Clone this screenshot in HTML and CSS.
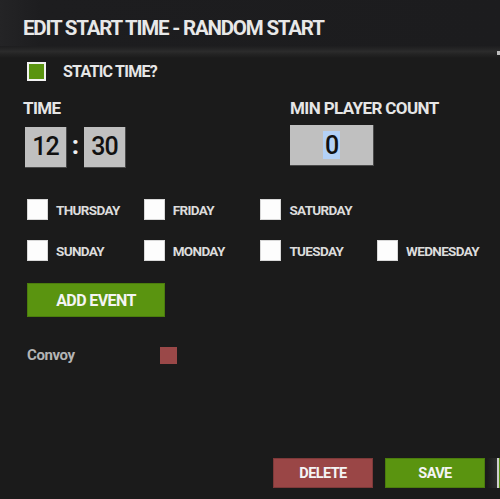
FILE: index.html
```html
<!DOCTYPE html>
<html>
<head>
<meta charset="utf-8">
<link rel="stylesheet" href="styles.css">
</head>
<body>
<div class="panel">
  <div class="header"><h1 class="title">EDIT START TIME - RANDOM START</h1></div>
  <div class="divider"></div>
  <span class="edge-mark"></span>
  <div class="static-row">
    <span class="check check-on"></span>
    <span class="static-label">STATIC TIME?</span>
  </div>
  <div class="fields">
    <div class="field">
      <div class="field-label">TIME</div>
      <div class="time-inputs">
        <div class="box box-small">12</div>
        <span class="colon">:</span>
        <div class="box box-small">30</div>
      </div>
    </div>
    <div class="field">
      <div class="field-label">MIN PLAYER COUNT</div>
      <div class="box box-wide"><span class="sel">0</span></div>
    </div>
  </div>
  <div class="days">
    <div class="day"><span class="check-day"></span><span class="day-label">THURSDAY</span></div>
    <div class="day"><span class="check-day"></span><span class="day-label">FRIDAY</span></div>
    <div class="day"><span class="check-day"></span><span class="day-label">SATURDAY</span></div>
    <div class="day"></div>
    <div class="day"><span class="check-day"></span><span class="day-label">SUNDAY</span></div>
    <div class="day"><span class="check-day"></span><span class="day-label">MONDAY</span></div>
    <div class="day"><span class="check-day"></span><span class="day-label">TUESDAY</span></div>
    <div class="day"><span class="check-day"></span><span class="day-label">WEDNESDAY</span></div>
  </div>
  <div class="add-row"><button class="btn btn-green btn-add">ADD EVENT</button></div>
  <div class="event-row">
    <span class="event-name">Convoy</span>
    <span class="event-swatch"></span>
  </div>
  <div class="footer">
    <button class="btn btn-red btn-foot">DELETE</button>
    <button class="btn btn-green btn-foot">SAVE</button>
    <div class="peek"><span class="peek-shadow"></span><span class="peek-btn"></span></div>
  </div>
</div>
</body>
</html>
```

FILE: styles.css
```css
* { box-sizing: border-box; }
html, body {
  margin: 0;
  padding: 0;
  width: 500px;
  height: 499px;
  overflow: hidden;
  background: #1b1b1b;
}
.panel {
  position: relative;
  width: 500px;
  height: 499px;
  display: flex;
  flex-direction: column;
  font-family: Roboto, "Liberation Sans", sans-serif;
  font-weight: 700;
  color: #e6e6e6;
}
.header {
  height: 46px;
  background: linear-gradient(90deg, #242426 0%, #1d1d1f 8%, #1c1c1e 100%);
  display: flex;
  align-items: center;
  padding-left: 23px;
}
.title {
  margin: 0;
  padding-top: 10px;
  font-size: 20.5px;
  font-weight: 700;
  letter-spacing: -1.2px;
  color: #e8e8e8;
}
.divider {
  height: 12px;
  background: linear-gradient(180deg, #1d1d1f 0%, #2b2b2b 45%, #232323 70%, #1b1b1b 100%);
}
.edge-mark {
  position: absolute;
  right: 0;
  top: 51px;
  width: 3px;
  height: 4px;
  background: #bdbdbd;
}
.static-row {
  display: flex;
  align-items: center;
  gap: 17px;
  padding-left: 27px;
  margin-top: 4px;
  height: 18px;
}
.check {
  width: 19px;
  height: 19px;
  border: 2px solid #f2f2f2;
}
.check-on { background: #5a9410; }
.static-label {
  font-size: 16px;
  letter-spacing: -0.75px;
  color: #e6e6e6;
}
.fields {
  display: grid;
  grid-template-columns: 267px 1fr;
  padding-left: 23px;
  margin-top: 18px;
}
.field-label {
  font-size: 17px;
  letter-spacing: -0.6px;
  line-height: 20px;
  color: #e6e6e6;
}
.time-inputs {
  display: flex;
  align-items: center;
  margin-top: 7px;
  padding-left: 2px;
}
.box {
  height: 41px;
  background: #c0c0c0;
  border-right: 1px solid #4a4a4a;
  border-bottom: 1px solid #4a4a4a;
  color: #111;
  font-weight: 500;
  font-size: 25px;
  letter-spacing: -1px;
  display: flex;
  align-items: center;
  justify-content: center;
}
.box-small { width: 42px; }
.colon {
  width: 17px;
  text-align: center;
  font-size: 26px;
  font-weight: 700;
  color: #f0f0f0;
  line-height: 41px;
  padding-bottom: 3px;
}
.box-wide {
  width: 84px;
  margin-top: 7px;
}
.sel {
  background: #b3d1f7;
  padding: 3px 2px 2px;
  line-height: 23px;
}
.days {
  display: grid;
  grid-template-columns: repeat(4, 116.7px);
  row-gap: 20px;
  padding-left: 27px;
  margin-top: 30px;
}
.day {
  display: flex;
  align-items: center;
  gap: 8px;
  height: 21px;
}
.check-day {
  width: 21px;
  height: 21px;
  background: #fdfdfd;
  border: 1px solid #d8d8d8;
  flex: none;
}
.day-label {
  font-size: 13.5px;
  letter-spacing: -0.65px;
  color: #dcdcdc;
}
.add-row {
  padding-left: 27px;
  margin-top: 22px;
}
.btn {
  font-family: Roboto, "Liberation Sans", sans-serif;
  font-weight: 700;
  color: #f4f4f4;
  border: none;
  padding: 0;
  display: flex;
  align-items: center;
  justify-content: center;
  letter-spacing: -0.6px;
}
.btn-green {
  background: #5a9410;
  box-shadow: inset 0 0 0 1px #4b7d0d;
}
.btn-red {
  background: #9a4646;
  box-shadow: inset 0 0 0 1px #7e3939;
}
.btn-add {
  width: 138px;
  height: 34px;
  font-size: 16px;
}
.event-row {
  display: flex;
  align-items: center;
  padding-left: 27px;
  margin-top: 29px;
  height: 18px;
}
.event-name {
  width: 133px;
  font-size: 15px;
  letter-spacing: -0.4px;
  color: #b4b4b4;
}
.event-swatch {
  width: 17px;
  height: 17px;
  background: #9a4848;
}
.footer {
  margin-top: auto;
  margin-bottom: 11px;
  display: flex;
  padding-left: 273px;
  gap: 12px;
  height: 30px;
}
.btn-foot {
  width: 100px;
  height: 30px;
  font-size: 14.5px;
  flex: none;
}
.peek {
  display: flex;
  margin-left: -10px;
  flex: none;
}
.peek-shadow {
  width: 10px;
  height: 30px;
  background: linear-gradient(90deg, #1b1b1b, #2e2e2e);
}
.peek-btn {
  width: 10px;
  height: 30px;
  background: #5a9410;
  border-left: 2px solid #cfcfcf;
}
```
